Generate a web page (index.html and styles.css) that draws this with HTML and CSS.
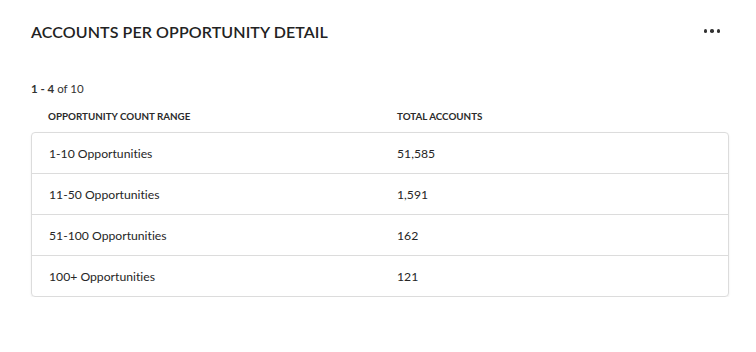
FILE: index.html
```html
<!DOCTYPE html>
<html>
<head>
<meta charset="utf-8">
<link rel="stylesheet" href="styles.css">
</head>
<body>
<div class="card">
  <div class="card-header">
    <h2 class="title">ACCOUNTS PER OPPORTUNITY DETAIL</h2>
    <button class="more" aria-label="More actions"><span></span><span></span><span></span></button>
  </div>
  <div class="count"><b>1 - 4</b> of 10</div>
  <div class="col-heads">
    <div class="col">OPPORTUNITY COUNT RANGE</div>
    <div class="col">TOTAL ACCOUNTS</div>
  </div>
  <div class="table">
    <div class="row"><div class="cell">1-10 Opportunities</div><div class="cell">51,585</div></div>
    <div class="row"><div class="cell">11-50 Opportunities</div><div class="cell">1,591</div></div>
    <div class="row"><div class="cell">51-100 Opportunities</div><div class="cell">162</div></div>
    <div class="row"><div class="cell">100+ Opportunities</div><div class="cell">121</div></div>
  </div>
</div>
</body>
</html>
```
FILE: styles.css
```css
html, body {
  margin: 0;
  padding: 0;
  background: #fff;
}
body {
  font-family: Lato, "Open Sans", sans-serif;
  color: #2b2b2b;
  font-variant-ligatures: none;
}
.card {
  width: 698px;
  padding: 20px 0 0 31px;
}
.card-header {
  display: flex;
  align-items: center;
  justify-content: space-between;
  height: 22px;
}
.title {
  margin: 0;
  font-size: 16px;
  font-weight: 600;
  letter-spacing: 0.1px;
  color: #222;
}
.more {
  border: 0;
  background: none;
  padding: 0;
  margin-right: 9px;
  display: flex;
  gap: 3px;
  cursor: pointer;
}
.more span {
  width: 3.5px;
  height: 3.5px;
  border-radius: 50%;
  background: #333;
}
.count {
  margin-top: 40px;
  font-size: 11.5px;
  line-height: 14px;
  height: 14px;
  color: #333;
}
.count b {
  font-weight: 700;
}
.col-heads {
  display: flex;
  margin-top: 12px;
  height: 16px;
  align-items: center;
}
.col {
  flex: 1;
  padding-left: 17px;
  font-size: 9.8px;
  font-weight: 700;
  color: #2b2b2b;
}
.table {
  margin-top: 8px;
  border: 1px solid #dcdcdc;
  border-radius: 4px;
  box-shadow: 0 1px 2px rgba(0,0,0,0.08);
}
.row {
  display: flex;
  height: 40px;
  align-items: center;
  border-top: 1px solid #dcdcdc;
}
.row:first-child {
  border-top: 0;
}
.cell {
  flex: 1;
  padding-left: 17px;
  padding-top: 1px;
  font-size: 12.2px;
  color: #262626;
}
```
